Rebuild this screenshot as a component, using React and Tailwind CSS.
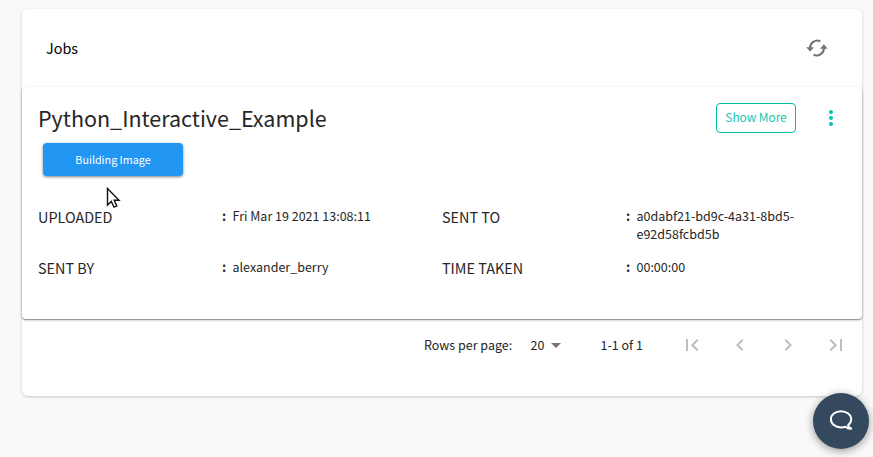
import {
  MdArrowDropDown,
  MdChevronLeft,
  MdChevronRight,
  MdFirstPage,
  MdLastPage,
  MdMoreVert,
} from "react-icons/md";

function Field({ label, value }) {
  return (
    <div className="flex w-[404px] items-start">
      <div className="w-[184px] text-[14.4px] leading-[20px]">{label}</div>
      <div className="w-[10.5px] text-[13px] font-bold leading-[18px]">:</div>
      <div className="w-[170px] text-[12.5px] leading-[18px]">{value}</div>
    </div>
  );
}

function SyncIcon() {
  return (
    <svg className="h-[18px] w-[22px]" viewBox="0 0 22 18" fill="none" stroke="#757575" strokeWidth="2.1">
      <path d="M14.400 2.200A7.400 7.400 0 0 0 4.100 9.500" />
      <path d="M7.600 15.800A7.400 7.400 0 0 0 17.900 8.500" />
      <path d="M0.300 8.300H7.900L4.100 12.700Z" fill="#757575" stroke="none" />
      <path d="M14.100 9.700H21.700L17.900 5.300Z" fill="#757575" stroke="none" />
    </svg>
  );
}

function Pointer() {
  return (
    <svg className="absolute left-[106px] top-[187px] h-[22px] w-[15px]" viewBox="0 0 15 22">
      <path
        d="M1.5 1.5V18L5.3 14.4L8 20.2L10.8 19L8.2 13.3H13Z"
        fill="#fff"
        stroke="#111"
        strokeWidth="1.4"
      />
    </svg>
  );
}

export default function App() {
  return (
    <div className="relative h-[457px] w-[873px] overflow-hidden bg-[#f9f9f9] pl-[22px] pt-[9px] font-['Noto_Sans_CJK_SC',sans-serif] text-[#262626]">
      <div className="h-[387px] w-[840px] rounded-[6px] bg-white shadow-[0_1px_3px_rgba(0,0,0,0.2)]">
        <header className="flex h-[78px] items-center justify-between pl-6 pr-[34px]">
          <h1 className="text-[14.4px] leading-[20px] text-black">Jobs</h1>
          <SyncIcon />
        </header>

        <section className="h-[232px] rounded-[4px] bg-white px-4 pt-4 shadow-[0_1px_3px_rgba(0,0,0,0.25),0_1px_1px_rgba(0,0,0,0.16),0_1px_1px_rgba(0,0,0,0.2)]">
          <div className="flex h-[30px] items-center">
            <h2 className="flex-1 text-[21.5px] leading-[28px]">Python_Interactive_Example</h2>
            <button className="h-[30px] w-[80px] rounded-[4px] border border-[#00bfa5] pb-[2px] text-[12px] leading-[26px] tracking-[-0.1px] text-[#1cc7b0]">
              Show More
            </button>
            <MdMoreVert className="ml-[23px] mr-[3px] size-[24px] text-[#00c4b4]" />
          </div>
          <button className="ml-[5px] mt-[10px] block h-[33px] w-[140px] rounded-[4px] bg-[#2196f3] text-[10.75px] leading-[33px] text-white shadow-[0_1px_3px_rgba(0,0,0,0.5)]">
            Building Image
          </button>
          <div className="mt-[31px] flex h-[51px]">
            <Field label="UPLOADED" value="Fri Mar 19 2021 13:08:11" />
            <Field label="SENT TO" value="a0dabf21-bd9c-4a31-8bd5-e92d58fcbd5b" />
          </div>
          <div className="flex">
            <Field label="SENT BY" value="alexander_berry" />
            <Field label="TIME TAKEN" value="00:00:00" />
          </div>
        </section>

        <footer className="flex h-[52px] items-center pl-[402px] text-[12.5px] leading-[18px]">
          <span className="w-[106.500px]">Rows per page:</span>
          <span className="w-[13.500px]">20</span>
          <MdArrowDropDown className="size-[24px] text-[#757575]" />
          <span className="ml-[32.500px] w-[79.500px]">1-1 of 1</span>
          <div className="flex gap-6 text-[#bdbdbd]">
            <MdFirstPage className="size-[24px]" />
            <MdChevronLeft className="size-[24px]" />
            <MdChevronRight className="size-[24px]" />
            <MdLastPage className="size-[24px]" />
          </div>
        </footer>
      </div>

      <Pointer />

      <button className="absolute left-[813px] top-[393px] flex size-[56px] items-center justify-center rounded-full bg-[#34495e] shadow-[0_2px_8px_rgba(0,0,0,0.4)]">
        <svg className="size-[24px]" viewBox="0 0 24 24" fill="none" stroke="#fff" strokeWidth="2" strokeLinejoin="round">
          <path d="M19 16.200C21 14.800 22.200 12.600 22.200 10.300C22.200 5.700 17.600 2.200 12 2.200S1.900 5.700 1.900 10.300S6.400 18.400 12 18.400C13.700 18.400 15.100 18.200 16.500 17.700C18 19.200 19.700 19.800 22.200 19.700C20.600 18.800 19.500 17.800 19 16.200Z" />
        </svg>
      </button>
    </div>
  );
}
